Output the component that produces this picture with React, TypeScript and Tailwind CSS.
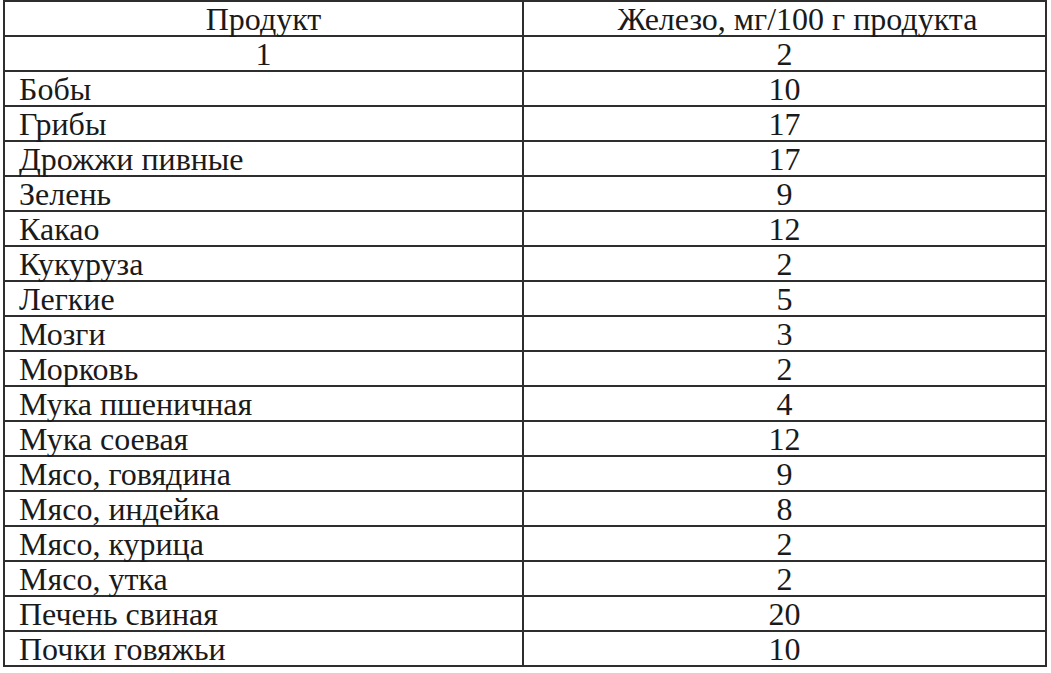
import React from "react";

const rows: [string, string][] = [
  ["Бобы", "10"],
  ["Грибы", "17"],
  ["Дрожжи пивные", "17"],
  ["Зелень", "9"],
  ["Какао", "12"],
  ["Кукуруза", "2"],
  ["Легкие", "5"],
  ["Мозги", "3"],
  ["Морковь", "2"],
  ["Мука пшеничная", "4"],
  ["Мука соевая", "12"],
  ["Мясо, говядина", "9"],
  ["Мясо, индейка", "8"],
  ["Мясо, курица", "2"],
  ["Мясо, утка", "2"],
  ["Печень свиная", "20"],
  ["Почки говяжьи", "10"],
];

const all: { a: string; b: string; center: boolean; head?: boolean }[] = [
  { a: "Продукт", b: "Железо, мг/100 г продукта", center: true, head: true },
  { a: "1", b: "2", center: true },
  ...rows.map(([a, b]) => ({ a, b, center: false })),
];

export default function App() {
  return (
    <div className="w-[1051px] h-[673px] bg-white overflow-hidden">
      <div className="ml-[3px] w-[1044px] border-2 border-[#2e2e2e] flex flex-col font-['Liberation_Serif','Times_New_Roman',serif] text-[32px] leading-[35px] text-[#1a1a1a]">
        {all.map((r, i) => {
          const last = i === all.length - 1;
          return (
            <div
              key={i}
              className={
                last
                  ? "flex h-[33px] whitespace-nowrap"
                  : "flex h-[35px] border-b-2 border-[#2e2e2e] whitespace-nowrap"
              }
            >
              <div
                className={
                  r.center
                    ? "w-[519px] shrink-0 border-r-2 border-[#2e2e2e] text-center"
                    : "w-[519px] shrink-0 border-r-2 border-[#2e2e2e] pl-[14px]"
                }
              >
                {r.a}
              </div>
              <div className={r.head ? "flex-1 text-center pl-[26px]" : "flex-1 text-center"}>{r.b}</div>
            </div>
          );
        })}
      </div>
    </div>
  );
}
